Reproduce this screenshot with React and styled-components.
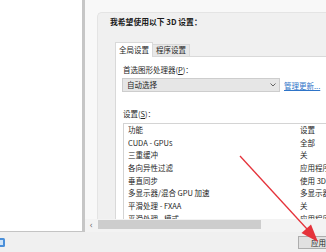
import React from 'react';
import styled, { createGlobalStyle } from 'styled-components';

const Global = createGlobalStyle`
  html, body { margin: 0; padding: 0; }
  body {
    width: 326px; height: 252px; overflow: hidden; background: #f0f0f0;
    font-family: "Noto Sans CJK SC", "Noto Sans", sans-serif;
    font-size: 7.5px; color: #262626;
  }
`;

const Frame = styled.div`
  position: relative; width: 326px; height: 252px; overflow: hidden;
  display: flex; flex-direction: column;
`;
const Main = styled.div`
  display: flex; height: 232px; flex: none;
`;
const LeftPane = styled.div`
  width: 82px; height: 231px; flex: none; background: #fff;
  border-bottom: 1px solid #c4c4c4;
`;
const Splitter = styled.div`
  width: 3px; flex: none; background: #c6c6c6;
`;
const RightPane = styled.div`
  flex: 1; min-width: 0; display: flex; flex-direction: column;
`;
const Scroller = styled.div`
  flex: 1; min-height: 0; overflow: hidden; background: #f8f8f8;
  padding: 12px 0 0 12px;
`;
const Section = styled.div`
  height: 100%; background: #f0f0f0; border: 1px solid #e4e4e4;
  border-right: none; border-bottom: none; border-top-left-radius: 5px;
  display: flex; flex-direction: column;
`;
const SectionTitle = styled.div`
  margin: 4px 0 0 12px; line-height: 10px; font-weight: 700; font-size: 7.8px;
  color: #1a1a1a; white-space: nowrap;
`;
const Tabs = styled.div`
  display: flex; align-items: flex-end; margin: 16px 0 0 17px; height: 14px;
`;
const Tab = styled.div`
  height: ${p => (p.$active ? '14px' : '11px')};
  padding: 0 3px; line-height: ${p => (p.$active ? '13px' : '10px')};
  background: ${p => (p.$active ? '#fff' : '#e8e8e8')};
  border: 1px solid #d9d9d9; border-bottom: ${p => (p.$active ? 'none' : '1px solid #d9d9d9')};
  ${p => (!p.$active ? 'border-left: none;' : '')}
  white-space: nowrap; position: relative; z-index: ${p => (p.$active ? 1 : 0)};
`;
const TabPage = styled.div`
  flex: 1; margin-left: 17px; margin-top: -1px; background: #fff;
  border-top: 1px solid #d9d9d9; border-left: 1px solid #d9d9d9;
  padding: 8px 0 0 7px; display: flex; flex-direction: column;
`;
const Label = styled.div`
  line-height: 10px; white-space: nowrap;
`;
const SelectRow = styled.div`
  display: flex; align-items: center; margin-top: 3px; gap: 4px;
`;
const Select = styled.div`
  width: 149px; height: 12px; background: #e6e6e6; border: 1px solid #cdcdcd;
  display: flex; align-items: center; justify-content: space-between;
  padding: 0 3px 0 4px; box-sizing: content-box; margin-left: -1px;
  line-height: 12px; flex: none;
`;
const Link = styled.a`
  color: #2e74c8; text-decoration: underline; white-space: nowrap; cursor: pointer;
`;
const SettingsLabel = styled(Label)`
  margin-top: 17px;
`;
const ListBox = styled.div`
  margin-top: 4px; border: 1px solid #d4d4d4; border-right: none;
  padding: 0 0 0 4px; display: flex; flex-direction: column; flex: 1;
`;
const Row = styled.div`
  display: grid; grid-template-columns: 172px 1fr; line-height: 12.7px;
  height: 12.7px; white-space: nowrap; overflow: hidden;
`;
const HScroll = styled.div`
  height: 13px; flex: none; background: #f3f3f3; display: flex; align-items: flex-start;
`;
const ArrowBtn = styled.div`
  width: 12px; height: 13px; display: flex; align-items: center; justify-content: center;
  color: #6b6b6b; font-size: 8px; font-family: "DejaVu Sans", sans-serif;
`;
const Thumb = styled.div`
  width: 163px; height: 9px; margin: 1px 0 0 1px; background: #cdcdcd;
`;
const BottomBar = styled.div`
  height: 20px; flex: none; display: flex; justify-content: space-between;
  align-items: flex-start; background: #f0f0f0;
`;
const InfoIcon = styled.div`
  margin: 6px 0 0 -5px; width: 10px; height: 9px;
`;
const ApplyButton = styled.div`
  margin-top: 4px; margin-right: -36px; width: 50px; height: 11px;
  border: 1px solid #adadad; background: #e1e1e1; padding-left: 12px;
  line-height: 11px; white-space: nowrap; flex: none;
`;
const Annotation = styled.svg`
  position: absolute; left: 0; top: 0; pointer-events: none;
`;

const rows = [
  ['功能', '设置'],
  ['CUDA - GPUs', '全部'],
  ['三重缓冲', '关'],
  ['各向异性过滤', '应用程序控制的'],
  ['垂直同步', '使用 3D 应用程序设置'],
  ['多显示器/混合 GPU 加速', '多显示器性能模式'],
  ['平滑处理 - FXAA', '关'],
  ['平滑处理 - 模式', '应用程序控制的'],
];

export default function App() {
  return (
    <Frame>
      <Global />
      <Main>
        <LeftPane />
        <Splitter />
        <RightPane>
          <Scroller>
            <Section>
              <SectionTitle>我希望使用以下 3D 设置：</SectionTitle>
              <Tabs>
                <Tab $active>全局设置</Tab>
                <Tab>程序设置</Tab>
              </Tabs>
              <TabPage>
                <Label>首选图形处理器(<u>P</u>)：</Label>
                <SelectRow>
                  <Select>
                    <span>自动选择</span>
                    <svg width="6" height="4" viewBox="0 0 6 4">
                      <path d="M0.5 0.5 L3 3 L5.5 0.5" fill="none" stroke="#555" strokeWidth="0.9" />
                    </svg>
                  </Select>
                  <Link>管理更新...</Link>
                </SelectRow>
                <SettingsLabel>设置(<u>S</u>)：</SettingsLabel>
                <ListBox>
                  {rows.map(([a, b]) => (
                    <Row key={a}>
                      <span>{a}</span>
                      <span>{b}</span>
                    </Row>
                  ))}
                </ListBox>
              </TabPage>
            </Section>
          </Scroller>
          <HScroll>
            <ArrowBtn>‹</ArrowBtn>
            <Thumb />
          </HScroll>
        </RightPane>
      </Main>
      <BottomBar>
        <InfoIcon>
          <svg width="10" height="9" viewBox="0 0 10 9">
            <rect x="0" y="0" width="10" height="9" rx="1.5" fill="#4a8fd9" />
            <rect x="2" y="2" width="6" height="5" fill="#cfe3f7" />
          </svg>
        </InfoIcon>
        <ApplyButton>应用(A)</ApplyButton>
      </BottomBar>
      <Annotation width="326" height="252" viewBox="0 0 326 252">
        <line x1="240" y1="156" x2="307" y2="229" stroke="#e5333b" strokeWidth="1.3" />
        <polygon points="318,242 301.5,233 311,224.5" fill="#e5333b" />
      </Annotation>
    </Frame>
  );
}
